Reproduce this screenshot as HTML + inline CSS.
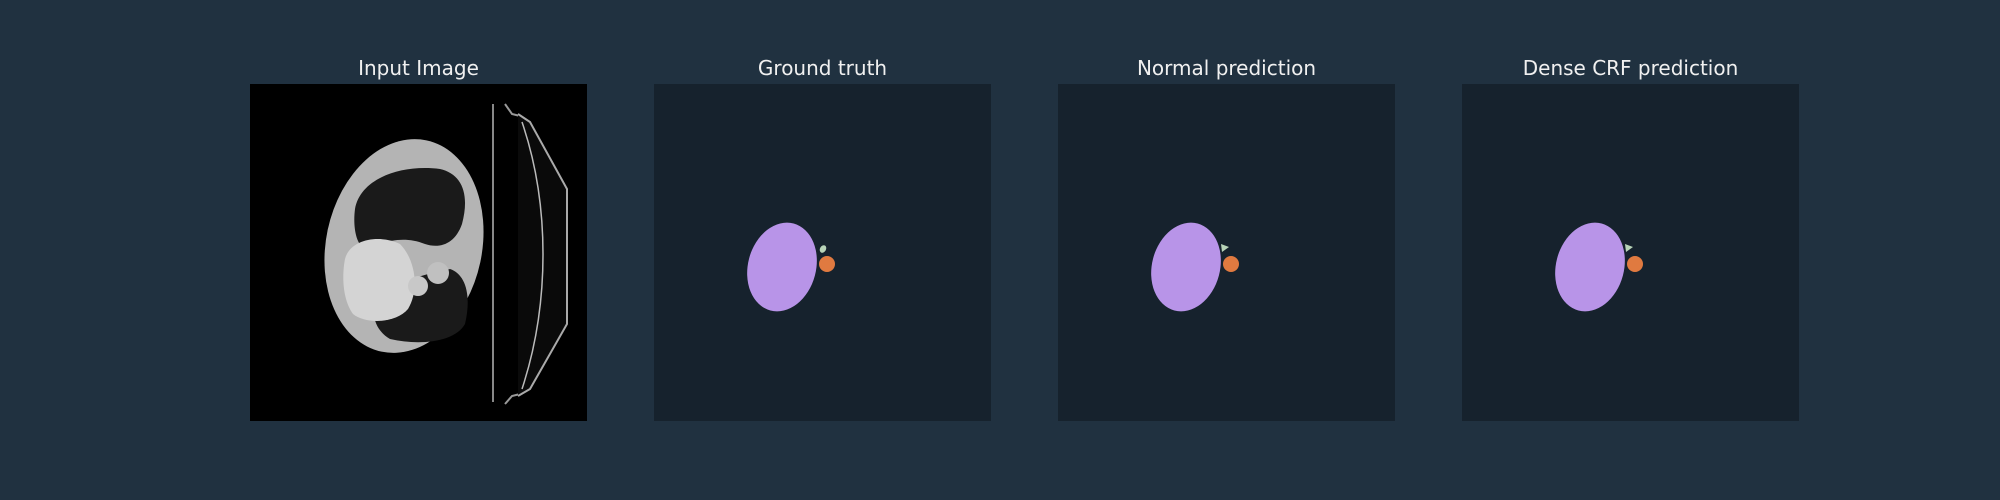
<!DOCTYPE html>
<html><head><meta charset="utf-8"><style>
html,body{margin:0;padding:0;background:#203140;width:2000px;height:500px;overflow:hidden}
.t{position:absolute;top:56px;width:337px;text-align:center;color:#f0f0f0;font:20px "DejaVu Sans","Liberation Sans",sans-serif}
svg{position:absolute;top:84px}
</style></head><body>
<div class="t" style="left:250px">Input Image</div>
<div class="t" style="left:654px">Ground truth</div>
<div class="t" style="left:1058px">Normal prediction</div>
<div class="t" style="left:1462px">Dense CRF prediction</div>

<svg style="left:250px" width="337" height="337" viewBox="0 0 337 337">
<rect width="337" height="337" fill="#000"/>
<ellipse cx="154" cy="162" rx="78" ry="108" transform="rotate(12 154 162)" fill="#b4b4b4"/>
<path d="M105,125 C110,95 150,80 190,85 C212,90 220,110 212,140 C205,160 190,165 175,160 C150,150 130,160 115,165 C105,160 103,140 105,125Z" fill="#1a1a1a"/>
<path d="M125,225 C140,195 180,190 200,185 C215,190 222,210 215,240 C205,258 170,262 140,255 C128,248 122,235 125,225Z" fill="#1a1a1a"/>
<path d="M95,175 C100,155 130,150 150,160 C165,175 170,205 158,225 C145,240 115,240 103,230 C92,215 92,190 95,175Z" fill="#d4d4d4"/>
<circle cx="168" cy="202" r="10" fill="#c8c8c8"/>
<circle cx="188" cy="189" r="11" fill="#c0c0c0"/>
<line x1="243" y1="20" x2="243" y2="318" stroke="#888" stroke-width="2"/>
<path d="M255,20 L262,30 L270,32 C300,120 300,200 270,310 L262,312 L255,320" fill="none" stroke="#999" stroke-width="2"/>
<path d="M268,30 L280,38 L317,105 L317,240 L280,305 L268,312" fill="#0a0a0a" stroke="#aaa" stroke-width="2"/>
<path d="M272,38 C300,120 300,220 272,305" fill="none" stroke="#bbb" stroke-width="1.5"/>
</svg>

<svg style="left:654px" width="337" height="337"><rect width="337" height="337" fill="#16222d"/>
<ellipse cx="128" cy="183" rx="34" ry="45" transform="rotate(15 128 183)" fill="#b894e8"/>
<ellipse cx="169" cy="165" rx="3" ry="4" transform="rotate(30 169 165)" fill="#b8d4b8"/>
<circle cx="173" cy="180" r="8" fill="#e07a40"/></svg>

<svg style="left:1058px" width="337" height="337"><rect width="337" height="337" fill="#16222d"/>
<ellipse cx="128" cy="183" rx="34" ry="45" transform="rotate(15 128 183)" fill="#b894e8"/>
<path d="M163,160 L171,163 L164,168Z" fill="#b8d4b8"/>
<circle cx="173" cy="180" r="8" fill="#e07a40"/></svg>

<svg style="left:1462px" width="337" height="337"><rect width="337" height="337" fill="#16222d"/>
<ellipse cx="128" cy="183" rx="34" ry="45" transform="rotate(15 128 183)" fill="#b894e8"/>
<path d="M163,160 L171,163 L164,168Z" fill="#b8d4b8"/>
<circle cx="173" cy="180" r="8" fill="#e07a40"/></svg>
</body></html>
